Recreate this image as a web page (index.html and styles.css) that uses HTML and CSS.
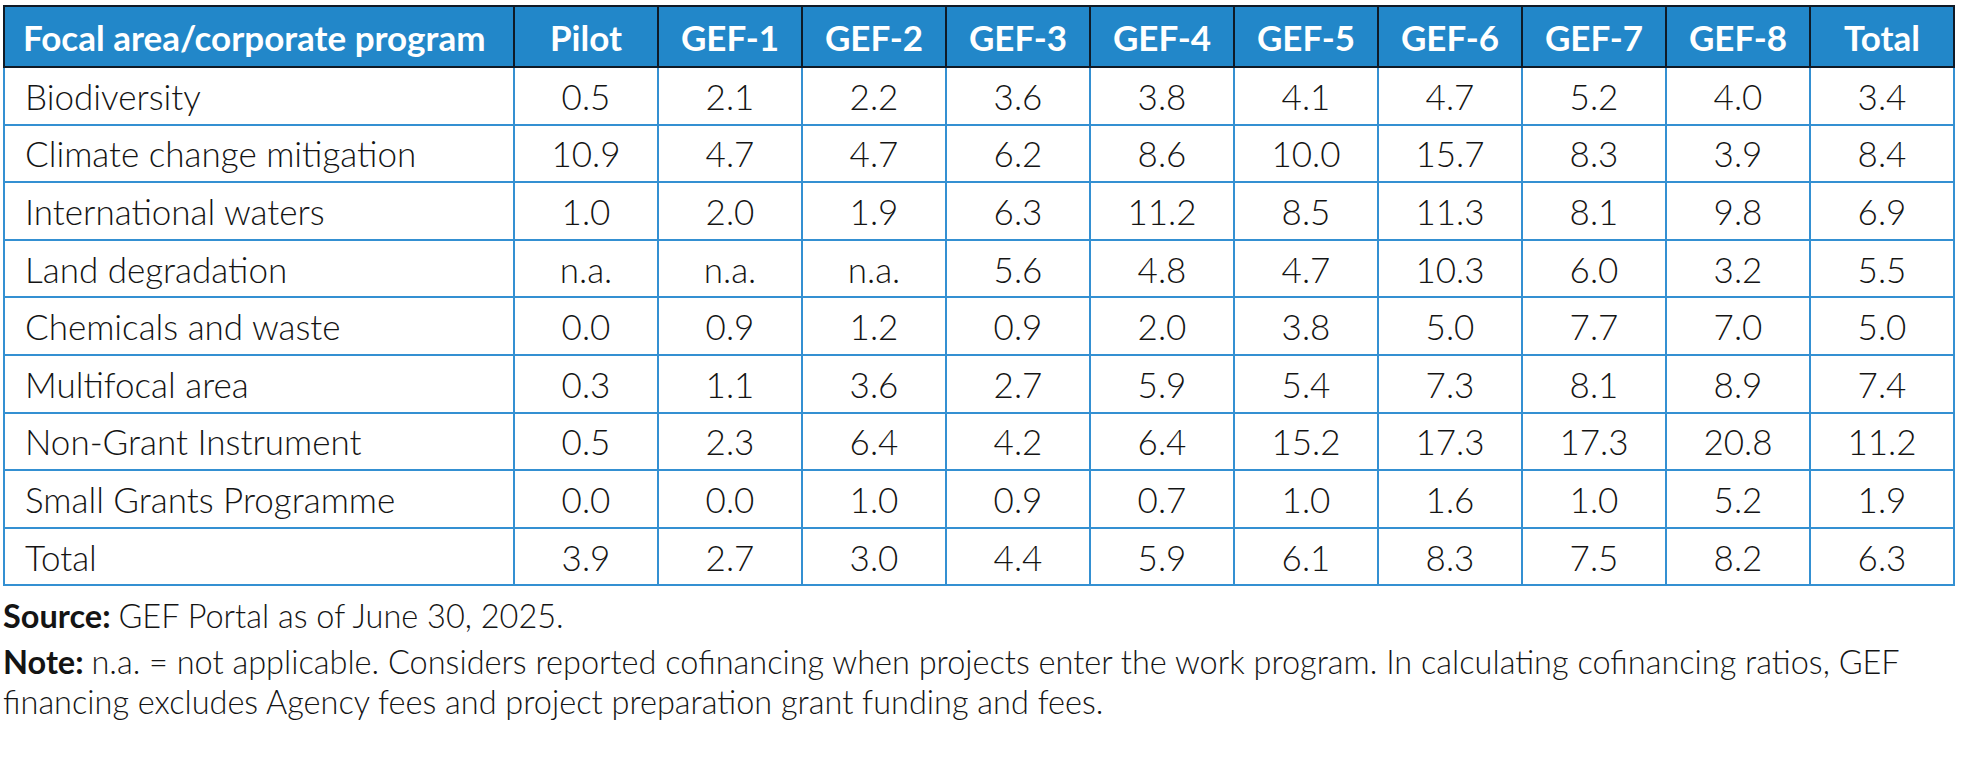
FILE: index.html
```html
<!DOCTYPE html>
<html lang="en">
<head>
<meta charset="utf-8">
<title>Cofinancing ratios</title>
<link rel="stylesheet" href="styles.css">
</head>
<body>
<div class="page">
  <table class="data">
    <colgroup>
      <col class="c-name">
      <col class="c-num"><col class="c-num"><col class="c-num"><col class="c-num"><col class="c-num">
      <col class="c-num"><col class="c-num"><col class="c-num"><col class="c-num"><col class="c-num">
    </colgroup>
    <thead>
      <tr>
        <th class="name">Focal area/corporate program</th>
        <th>Pilot</th><th>GEF-1</th><th>GEF-2</th><th>GEF-3</th><th>GEF-4</th>
        <th>GEF-5</th><th>GEF-6</th><th>GEF-7</th><th>GEF-8</th><th>Total</th>
      </tr>
    </thead>
    <tbody>
      <tr><td class="name">Biodiversity</td><td>0.5</td><td>2.1</td><td>2.2</td><td>3.6</td><td>3.8</td><td>4.1</td><td>4.7</td><td>5.2</td><td>4.0</td><td>3.4</td></tr>
      <tr><td class="name">Climate change mitigation</td><td>10.9</td><td>4.7</td><td>4.7</td><td>6.2</td><td>8.6</td><td>10.0</td><td>15.7</td><td>8.3</td><td>3.9</td><td>8.4</td></tr>
      <tr><td class="name">International waters</td><td>1.0</td><td>2.0</td><td>1.9</td><td>6.3</td><td>11.2</td><td>8.5</td><td>11.3</td><td>8.1</td><td>9.8</td><td>6.9</td></tr>
      <tr><td class="name">Land degradation</td><td>n.a.</td><td>n.a.</td><td>n.a.</td><td>5.6</td><td>4.8</td><td>4.7</td><td>10.3</td><td>6.0</td><td>3.2</td><td>5.5</td></tr>
      <tr><td class="name">Chemicals and waste</td><td>0.0</td><td>0.9</td><td>1.2</td><td>0.9</td><td>2.0</td><td>3.8</td><td>5.0</td><td>7.7</td><td>7.0</td><td>5.0</td></tr>
      <tr><td class="name">Multifocal area</td><td>0.3</td><td>1.1</td><td>3.6</td><td>2.7</td><td>5.9</td><td>5.4</td><td>7.3</td><td>8.1</td><td>8.9</td><td>7.4</td></tr>
      <tr><td class="name">Non-Grant Instrument</td><td>0.5</td><td>2.3</td><td>6.4</td><td>4.2</td><td>6.4</td><td>15.2</td><td>17.3</td><td>17.3</td><td>20.8</td><td>11.2</td></tr>
      <tr><td class="name">Small Grants Programme</td><td>0.0</td><td>0.0</td><td>1.0</td><td>0.9</td><td>0.7</td><td>1.0</td><td>1.6</td><td>1.0</td><td>5.2</td><td>1.9</td></tr>
      <tr><td class="name">Total</td><td>3.9</td><td>2.7</td><td>3.0</td><td>4.4</td><td>5.9</td><td>6.1</td><td>8.3</td><td>7.5</td><td>8.2</td><td>6.3</td></tr>
    </tbody>
  </table>
  <div class="notes">
    <p class="note"><strong>Source: </strong>GEF Portal as of June 30, 2025.</p>
    <p class="note"><strong>Note: </strong>n.a. = not applicable. Considers reported cofinancing when projects enter the work program. In calculating cofinancing ratios, GEF financing excludes Agency fees and project preparation grant funding and fees.</p>
  </div>
</div>
</body>
</html>
```

FILE: styles.css
```css
html, body {
  margin: 0;
  padding: 0;
  background: #ffffff;
}

.page {
  padding: 5px 5px 0 3px;
  font-family: "Lato", "Liberation Sans", sans-serif;
  color: #141414;
}

.data {
  border-collapse: collapse;
  width: 1951px;
  table-layout: fixed;
}

.c-name { width: 510px; }
.c-num { width: 144px; }

.data th {
  background: #2287c9;
  color: #ffffff;
  font-weight: 700;
  font-size: 35px;
  height: 59px;
  padding: 0;
  text-align: center;
  border: 2px solid #0f1a26;
}

.data th.name {
  text-align: left;
  padding-left: 18px;
}

.data td {
  font-size: 35px;
  font-weight: 300;
  height: 55.6px;
  padding: 0;
  text-align: center;
  border: 2px solid #3490d2;
}

.data td.name {
  text-align: left;
  padding-left: 20px;
}

.notes {
  padding-top: 10px;
}

.note {
  margin: 0 0 6px 0;
  font-size: 32.5px;
  font-weight: 300;
  line-height: 40px;
}

.note strong {
  font-weight: 700;
}
```
